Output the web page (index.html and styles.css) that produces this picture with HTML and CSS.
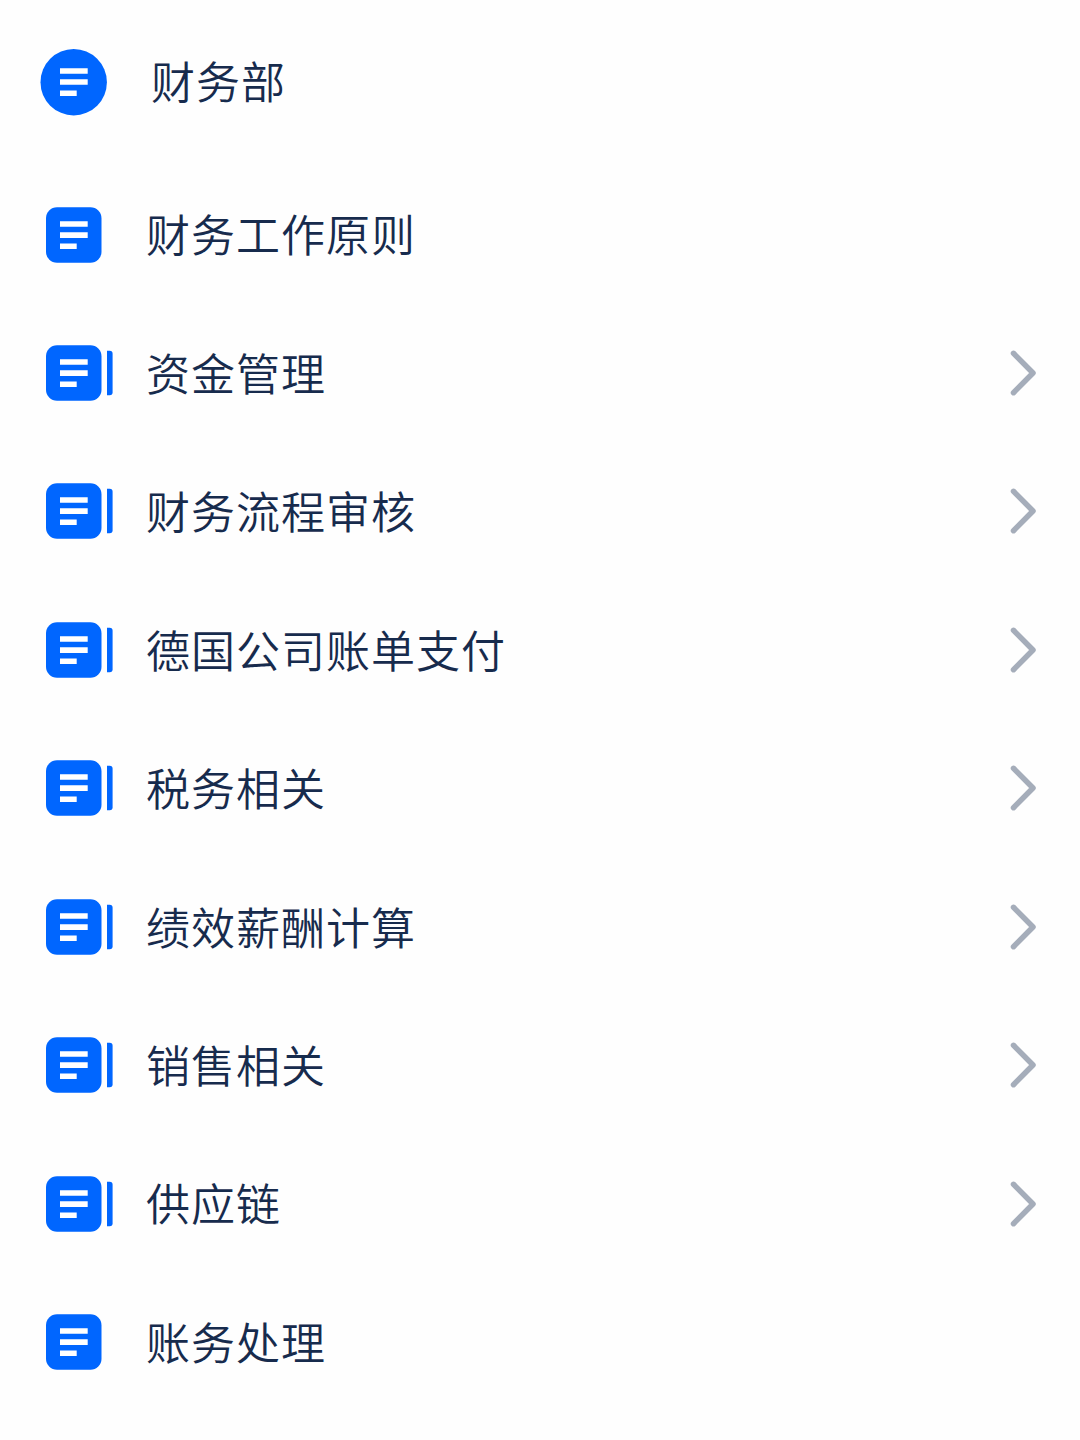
FILE: index.html
```html
<!DOCTYPE html>
<html lang="zh-CN">
<head>
   <meta charset="utf-8">
   <title>财务部</title>
   <link rel="stylesheet" href="styles.css">
</head>
<body>

<svg class="defs">
   <symbol id="space" viewBox="0 0 67 67">
      <circle cx="33.7" cy="33.2" r="33.2" fill="#06f" />
      <path d="M20 22h27.7M20 33h27.7M20 44.2h16.7" stroke="#fff" stroke-width="5.6" />
   </symbol>
   <symbol id="page" viewBox="0 0 67 56">
      <rect y=".3" width="55.5" height="55.5" rx="11" fill="#06f" />
      <path d="M14 17h27.7M14 28.1h27.7M14 39.2h16.7" stroke="#fff" stroke-width="5.6" />
   </symbol>
   <symbol id="pages" viewBox="0 0 67 56">
      <use href="#page" width="67" height="56" />
      <path d="M61 5.8h2.6q3 0 3 3v38.4q0 3-3 3H61z" fill="#06f" />
   </symbol>
   <symbol id="arrow" viewBox="0 0 28 46">
      <path d="M3.5 3.3L23 23 3.5 42.7" fill="none" stroke="#a5adba" stroke-width="5.5" stroke-linecap="round" stroke-linejoin="round" />
   </symbol>
</svg>

<div class="head">
   <svg class="space"><use href="#space" /></svg>
   <span>财务部</span>
</div>

<ul class="list">
   <li><svg class="icon"><use href="#page" /></svg><span>财务工作原则</span></li>
   <li><svg class="icon"><use href="#pages" /></svg><span>资金管理</span><svg class="arrow"><use href="#arrow" /></svg></li>
   <li><svg class="icon"><use href="#pages" /></svg><span>财务流程审核</span><svg class="arrow"><use href="#arrow" /></svg></li>
   <li><svg class="icon"><use href="#pages" /></svg><span>德国公司账单支付</span><svg class="arrow"><use href="#arrow" /></svg></li>
   <li><svg class="icon"><use href="#pages" /></svg><span>税务相关</span><svg class="arrow"><use href="#arrow" /></svg></li>
   <li><svg class="icon"><use href="#pages" /></svg><span>绩效薪酬计算</span><svg class="arrow"><use href="#arrow" /></svg></li>
   <li><svg class="icon"><use href="#pages" /></svg><span>销售相关</span><svg class="arrow"><use href="#arrow" /></svg></li>
   <li><svg class="icon"><use href="#pages" /></svg><span>供应链</span><svg class="arrow"><use href="#arrow" /></svg></li>
   <li><svg class="icon"><use href="#page" /></svg><span>账务处理</span></li>
</ul>

</body>
</html>
```
FILE: styles.css
```css
body {
   margin: 0;
   background-color: #fefefe;
   color: #172b4d;
   font-family: "Noto Sans CJK SC", sans-serif;
   font-size: 44px;
   font-weight: 350;
   line-height: 64px;
   letter-spacing: 1px;
}

.defs {
   display: none;
}

.head {
   display: flex;
   align-items: center;
   height: 165.4px;
   padding-left: 40px;
}

.head span {
   padding-bottom: 5px;
}

.space {
   width: 67px;
   height: 67px;
   margin-right: 44px;
}

.list {
   margin: 0;
   padding: 0;
   list-style: none;
}

.list li {
   display: flex;
   align-items: center;
   height: 138.45px;
   padding: 0 42px 0 46px;
}

.list span {
   padding-bottom: 2.6px;
}

.icon {
   width: 67px;
   height: 56px;
   margin-right: 33px;
}

.arrow {
   width: 28px;
   height: 46px;
   margin-left: auto;
}
```
